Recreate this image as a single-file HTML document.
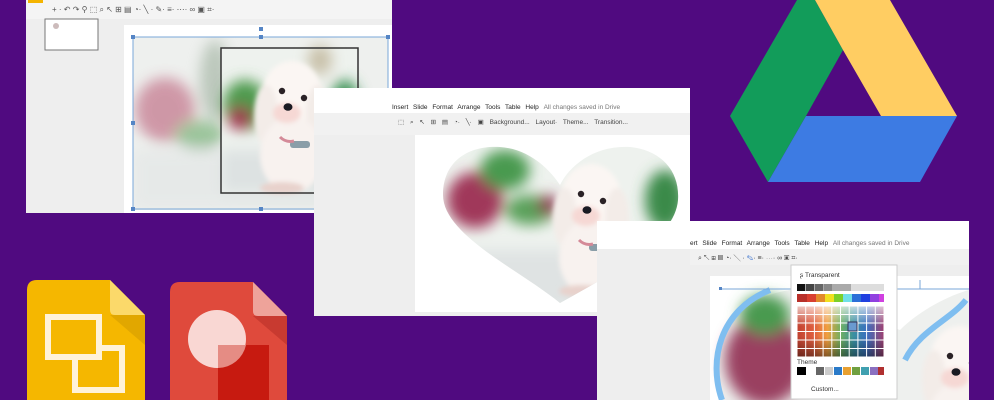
<!DOCTYPE html>
<html><head><style>
html,body{margin:0;padding:0;width:994px;height:400px;overflow:hidden;background:#500a80;font-family:"Liberation Sans",sans-serif}
svg{display:block;position:absolute;left:0;top:0}
</style></head><body>
<svg width="994" height="400" viewBox="0 0 994 400">
<defs>
<filter id="b" x="-30%" y="-30%" width="160%" height="160%"><feGaussianBlur stdDeviation="7"/></filter>
<filter id="b2" x="-20%" y="-20%" width="140%" height="140%"><feGaussianBlur stdDeviation="2.5"/></filter>
<clipPath id="c1"><rect x="133" y="37" width="255" height="173"/></clipPath>
<clipPath id="h2"><path d="M560 303 C520 270 443 235 443 195 C443 160 470 145 500 147 C530 149 550 170 560 185 C570 165 595 145 630 147 C660 150 680 170 678 200 C675 240 610 275 560 303Z"/></clipPath>
<clipPath id="c3"><rect x="710" y="276" width="259" height="124"/></clipPath>
<g id="dog">
<g filter="url(#b2)">
<ellipse cx="0" cy="0" rx="30" ry="34" fill="#fbf6f3"/>
<ellipse cx="-26" cy="20" rx="12" ry="30" fill="#f3ece8"/>
<ellipse cx="26" cy="20" rx="12" ry="30" fill="#f3ece8"/>
<ellipse cx="0" cy="60" rx="32" ry="38" fill="#f8f2ef"/>
<ellipse cx="-5" cy="18" rx="14" ry="10" fill="#f6d8d4"/>
<ellipse cx="-10" cy="93" rx="22" ry="6" fill="#e8d2cc"/>
</g>
<circle cx="-10" cy="-4" r="3.2" fill="#2a2226"/><circle cx="12" cy="3" r="3.2" fill="#2a2226"/><ellipse cx="-4" cy="12" rx="4.5" ry="3.8" fill="#1a1a22"/>
<rect x="-2" y="46" width="20" height="7" rx="3" fill="#8a9ea8"/>
<path d="M-12 42 q6 6 14 4" stroke="#d48a98" stroke-width="3" fill="none"/>
</g>
</defs>

<rect x="26" y="0" width="366" height="213" fill="#eeeeee"/>
<rect x="26" y="0" width="366" height="19" fill="#f4f4f4"/>
<rect x="28" y="0" width="15" height="3" fill="#f4b400"/>
<text x="52" y="12" fill="#555" font-size="8">+ · ↶ ↷ ⚲  ⬚ ⌕  ↖ ⊞ ▤ ◔· ╲ ·  ✎· ≡· ⋯·  ∞ ▣  ⌗·</text>
<rect x="45" y="19" width="53" height="31" fill="#fff" stroke="#777"/>
<circle cx="56" cy="26" r="3" fill="#cbb"/>
<rect x="124" y="25" width="268" height="188" fill="#fff"/>
<g clip-path="url(#c1)">
<rect x="133" y="37" width="255" height="173" fill="#eef0ee"/>
<g filter="url(#b)" opacity="0.5">
<ellipse cx="165" cy="110" rx="30" ry="32" fill="#b04060"/>
<ellipse cx="200" cy="135" rx="25" ry="15" fill="#4a9a4a"/>
<ellipse cx="215" cy="80" rx="15" ry="40" fill="#8aa08a"/>
<rect x="133" y="150" width="255" height="60" fill="#dfe3e3"/>
</g>
<rect x="221" y="48" width="137" height="145" fill="#eef2ee"/>
<g filter="url(#b)">
<ellipse cx="245" cy="105" rx="22" ry="25" fill="#4e9a4e"/>
<ellipse cx="240" cy="118" rx="12" ry="12" fill="#a03050"/>
<ellipse cx="345" cy="110" rx="15" ry="30" fill="#2f8a4a"/>
<ellipse cx="320" cy="60" rx="12" ry="15" fill="#c8c0a8"/>
<rect x="221" y="150" width="137" height="43" fill="#dde2e2"/>
</g>
<use href="#dog" x="292" y="95"/>
</g>
<rect x="221" y="48" width="137" height="145" fill="none" stroke="#333" stroke-width="1.5"/>
<rect x="133" y="37" width="255" height="172" fill="none" stroke="#7aa7d8" stroke-width="1"/>
<g fill="#5585c5"><rect x="131" y="35" width="4" height="4"/><rect x="259" y="35" width="4" height="4"/><rect x="386" y="35" width="4" height="4"/><rect x="131" y="121" width="4" height="4"/><rect x="386" y="121" width="4" height="4"/><rect x="131" y="207" width="4" height="4"/><rect x="259" y="207" width="4" height="4"/><rect x="259" y="27" width="4" height="4"/></g>

<rect x="314" y="88" width="376" height="228" fill="#eeeeee"/>
<rect x="314" y="88" width="376" height="26" fill="#fff"/>
<rect x="314" y="113" width="376" height="22" fill="#f1f1f1"/>
<text x="392" y="109" font-size="6.5" fill="#222" word-spacing="3">Insert Slide Format Arrange Tools Table Help <tspan fill="#777" word-spacing="0">All changes saved in Drive</tspan></text>
<text x="398" y="124" font-size="6.5" fill="#444" word-spacing="4">⬚ ⌕ ↖ ⊞ ▤ ◔· ╲· ▣ Background... Layout· Theme... Transition...</text>
<rect x="415" y="135" width="275" height="177" fill="#fff"/>
<g clip-path="url(#h2)">
<rect x="440" y="140" width="245" height="170" fill="#eef2ee"/>
<g filter="url(#b)">
<ellipse cx="475" cy="200" rx="28" ry="28" fill="#a0385a"/>
<ellipse cx="505" cy="170" rx="25" ry="20" fill="#4a9a50"/>
<ellipse cx="530" cy="210" rx="25" ry="15" fill="#5aa05a"/>
<ellipse cx="665" cy="200" rx="20" ry="30" fill="#3a8a4a"/>
<ellipse cx="548" cy="205" rx="10" ry="10" fill="#8a3050"/>
<rect x="440" y="250" width="245" height="60" fill="#dfe3e3"/>
</g>
<use href="#dog" x="591" y="198"/>
</g>

<rect x="597" y="221" width="372" height="179" fill="#eeeeee"/>
<rect x="597" y="221" width="372" height="28" fill="#fff"/>
<rect x="690" y="249" width="279" height="16" fill="#f1f1f1"/>
<text x="690" y="245" font-size="6.5" fill="#222" word-spacing="3">ert Slide Format Arrange Tools Table Help <tspan fill="#777" word-spacing="0">All changes saved in Drive</tspan></text>
<text x="698" y="260" font-size="7" fill="#444">⌕  ↖ ⊞ ▤ ◔· ╲ ·  <tspan fill="#1a5cc8">✎</tspan>· ≡· ⋯·  ∞ ▣  ⌗·</text>
<rect x="710" y="276" width="259" height="124" fill="#fff"/>
<g clip-path="url(#c3)">
<path d="M722 400 C705 350 725 300 790 290 L900 330 C920 310 950 295 969 290 V400Z" fill="#eef0ee"/>
<g filter="url(#b)">
<ellipse cx="765" cy="360" rx="40" ry="45" fill="#9a4060"/>
<ellipse cx="765" cy="315" rx="25" ry="20" fill="#4a9a50"/>
</g>
<use href="#dog" x="960" y="360"/>
<path d="M722 400 C708 360 720 310 770 290 M905 360 C920 330 950 320 966 300" stroke="#7fbef0" stroke-width="6" fill="none"/>
</g>
<line x1="720" y1="289" x2="969" y2="289" stroke="#7aa7d8"/>
<rect x="719" y="287" width="3" height="3" fill="#5585c5"/>
<line x1="920" y1="280" x2="920" y2="289" stroke="#7aa7d8"/>
<rect x="791" y="265" width="106" height="134" fill="#fff" stroke="#ccc"/>
<text x="800" y="277" font-size="6.5" fill="#333">ʂ  Transparent</text>
<text x="797" y="364" font-size="6.5" fill="#333">Theme</text>
<text x="811" y="391" font-size="6.5" fill="#333">Custom...</text>
<rect x="797" y="294" width="11" height="8" fill="#b8302a"/><rect x="807" y="294" width="9" height="8" fill="#d94030"/><rect x="816" y="294" width="9" height="8" fill="#e28a2a"/><rect x="825" y="294" width="9" height="8" fill="#f0e020"/><rect x="834" y="294" width="9" height="8" fill="#7cd02a"/><rect x="843" y="294" width="9" height="8" fill="#70e0e8"/><rect x="852" y="294" width="9" height="8" fill="#2a70d8"/><rect x="861" y="294" width="9" height="8" fill="#2040e0"/><rect x="870" y="294" width="9" height="8" fill="#9040e0"/><rect x="879" y="294" width="5" height="8" fill="#d040e0"/>
<rect x="797" y="284" width="87" height="7" fill="#aaa"/>
<rect x="797" y="284" width="8" height="7" fill="#111"/><rect x="806" y="284" width="8" height="7" fill="#444"/><rect x="815" y="284" width="8" height="7" fill="#666"/><rect x="824" y="284" width="8" height="7" fill="#888"/><rect x="851" y="284" width="33" height="7" fill="#ddd"/>
<defs><linearGradient id="pg" x1="0" x2="1"><stop offset="0" stop-color="#c04030"/><stop offset=".2" stop-color="#e06040"/><stop offset=".35" stop-color="#f0a040"/><stop offset=".5" stop-color="#70b060"/><stop offset=".65" stop-color="#3a90a0"/><stop offset=".8" stop-color="#3a70c0"/><stop offset="1" stop-color="#a04070"/></linearGradient>
<linearGradient id="pv" x1="0" y1="0" x2="0" y2="1"><stop offset="0" stop-color="#fff" stop-opacity=".7"/><stop offset=".4" stop-color="#fff" stop-opacity="0"/><stop offset=".6" stop-color="#000" stop-opacity="0"/><stop offset="1" stop-color="#000" stop-opacity=".45"/></linearGradient>
<pattern id="grid" width="8.7" height="8.5" patternUnits="userSpaceOnUse" x="797" y="306"><rect width="8.7" height="8.5" fill="none" stroke="#fff" stroke-width="1"/></pattern></defs>
<rect x="797" y="306" width="87" height="51" fill="url(#pg)"/>
<rect x="797" y="306" width="87" height="51" fill="url(#pv)"/>
<rect x="797" y="306" width="87" height="51" fill="url(#grid)"/>
<rect x="848" y="322" width="9" height="9" fill="#6a9ad0" stroke="#335"/>
<g><rect x="797" y="367" width="9" height="8" fill="#000"/><rect x="816" y="367" width="8" height="8" fill="#666"/><rect x="825" y="367" width="8" height="8" fill="#ccc"/><rect x="834" y="367" width="8" height="8" fill="#2a7ac8"/><rect x="843" y="367" width="8" height="8" fill="#e8a030"/><rect x="852" y="367" width="8" height="8" fill="#70a040"/><rect x="861" y="367" width="8" height="8" fill="#40a0b0"/><rect x="870" y="367" width="8" height="8" fill="#8a70c0"/><rect x="878" y="367" width="6" height="8" fill="#b03030"/></g>

<polygon points="797,0 815,0 843,50 806,116 768,182 730,116" fill="#129c5a"/>
<polygon points="815,0 890,0 957,116 881,116 843,50" fill="#ffcd62"/>
<polygon points="806,116 957,116 920,182 768,182" fill="#3d7be3"/>

<path d="M37 280 H110 L145 315 V400 H27 V290 Q27 280 37 280Z" fill="#f5b700"/>
<path d="M110 280 L145 315 H115 Q110 315 110 310Z" fill="#fbd96a"/>
<path d="M110 315 L145 315 L145 345Z" fill="#d8a000" opacity=".7"/>
<rect x="48" y="317" width="51" height="40" fill="none" stroke="#fff2d8" stroke-width="6"/>
<path d="M75 360 V390 H122 V348 H102" fill="none" stroke="#fff2d8" stroke-width="6"/>
<path d="M180 282 H253 L287 316 V400 H170 V292 Q170 282 180 282Z" fill="#df4a3c"/>
<path d="M253 282 L287 316 H258 Q253 316 253 311Z" fill="#eea39a"/>
<path d="M253 316 L287 316 L287 345Z" fill="#b93028" opacity=".6"/>
<circle cx="217" cy="339" r="29" fill="#f9d7d3"/>
<rect x="218" y="345" width="51" height="55" fill="#c5170e" opacity=".95"/>
<path d="M218 345 H246 A29 29 0 0 1 218 368Z" fill="#e58c84"/>
</svg>
</body></html>
